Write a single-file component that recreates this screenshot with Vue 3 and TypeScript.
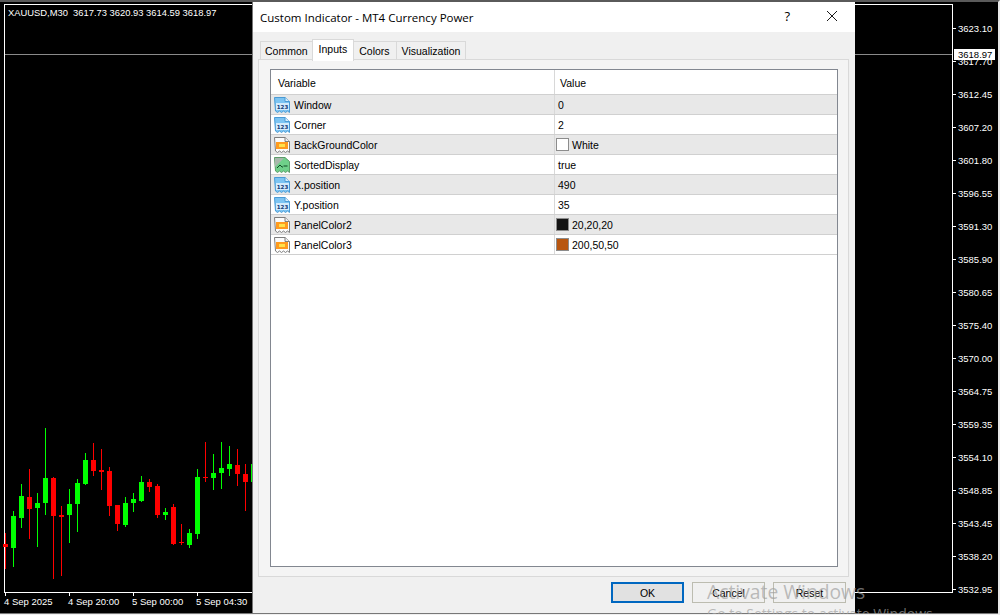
<template>
  <div class="terminal">
    <div class="chart-row">
      <div class="chart-frame">
        <span class="chart-title">XAUUSD,M30&nbsp; 3617.73 3620.93 3614.59 3618.97</span>
        <div class="bid-line"></div>
        <svg class="candles" width="252" height="615" viewBox="0 0 252 615">
          <g v-for="(c, i) in candles" :key="i" :fill="c.up ? '#00ff00' : '#ff0000'">
            <rect :x="candleX(i)" :y="c.high" width="1" :height="c.low - c.high" />
            <rect :x="candleX(i) - 2" :y="c.top" width="5" :height="c.bottom - c.top" />
          </g>
        </svg>
      </div>
      <div class="price-axis">
        <span v-for="p in prices" :key="p" class="price">{{ p }}</span>
        <span class="price-tag">3618.97</span>
      </div>
    </div>
    <div class="time-axis">
      <span v-for="t in times" :key="t" class="time">{{ t }}</span>
    </div>

    <div class="dialog">
      <div class="title-bar">
        <span class="title">Custom Indicator - MT4 Currency Power</span>
        <span class="help">?</span>
        <svg class="close" width="12" height="12" viewBox="0 0 12 12">
          <path d="M1 1l10 10M11 1L1 11" stroke="#1a1a1a" stroke-width="1" fill="none" />
        </svg>
      </div>
      <div class="dialog-body">
        <div class="tabs">
          <span v-for="t in tabs" :key="t" class="tab" :class="{ active: t === 'Inputs' }">{{ t }}</span>
        </div>
        <div class="tab-panel">
          <div class="list">
            <div class="list-head">
              <span class="col-var">Variable</span>
              <span class="col-val">Value</span>
            </div>
            <div v-for="(row, i) in rows" :key="row.name" class="row" :class="{ odd: i % 2 === 0 }">
              <div class="col-var">
                <svg v-if="row.kind === 'num'" class="icon" width="16" height="16" viewBox="0 0 16 16">
                  <path d="M.5 .5H11l4.500 4v11l-2-1.500-2 1.500-2-1.500-2 1.500-2-1.500-2 1.500-2-1.500z" fill="#7cc4f2" stroke="#4a9ad4" />
                  <path d="M11 .5v4h4.500" fill="#d8eefa" stroke="#4a9ad4" />
                  <rect x="2" y="6" width="13" height="7" fill="#d4ebfb" />
                  <text x="8.500" y="12" class="num-glyph">123</text>
                </svg>
                <svg v-else-if="row.kind === 'color'" class="icon" width="16" height="16" viewBox="0 0 16 16">
                  <path d="M.5 .5H11l4.500 4v11l-2-1.500-2 1.500-2-1.500-2 1.500-2-1.500-2 1.500-2-1.500z" fill="#fbfbfb" stroke="#7d7d7d" />
                  <path d="M11 .5v4h4.500" fill="#eee" stroke="#7d7d7d" />
                  <rect x="2" y="5" width="12" height="7" fill="#ff9a1e" />
                  <rect x="5" y="7" width="6" height="3" fill="#ffe14a" />
                </svg>
                <svg v-else class="icon" width="16" height="16" viewBox="0 0 16 16">
                  <path d="M.5 .5H11l4.500 4v11l-2-1.500-2 1.500-2-1.500-2 1.500-2-1.500-2 1.500-2-1.500z" fill="#6fd08a" stroke="#5b9a68" />
                  <path d="M1 1h9L1 10z" fill="#a9b8ad" />
                  <path d="M3 11l3-3 2 2h1M9.500 9h4" stroke="#0f4a24" fill="none" />
                </svg>
                <span class="name">{{ row.name }}</span>
              </div>
              <div class="col-val">
                <span v-if="row.swatch" class="swatch" :style="{ background: row.swatch }"></span>
                <span :class="{ plain: !row.swatch }">{{ row.value }}</span>
              </div>
            </div>
          </div>
        </div>
        <div class="buttons">
          <button class="btn default">OK</button>
          <button class="btn off">Cancel</button>
          <button class="btn off">Reset</button>
        </div>
      </div>
    </div>

    <div class="watermark">
      <div class="wm-big">Activate Windows</div>
      <div class="wm-small">Go to Settings to activate Windows.</div>
    </div>
  </div>
</template>

<script setup lang="ts">
interface Candle {
  high: number;
  low: number;
  top: number;
  bottom: number;
  up: boolean;
}

interface InputRow {
  name: string;
  value: string;
  kind: 'num' | 'color' | 'bool';
  swatch?: string;
}

function candle(high: number, low: number, top: number, bottom: number, up: boolean): Candle {
  return { high, low, top, bottom, up };
}

const candles: Candle[] = [
  candle(533, 569, 544, 547, false),
  candle(511, 567, 516, 548, true),
  candle(484, 528, 496, 518, true),
  candle(469, 539, 497, 509, false),
  candle(493, 547, 503, 508, true),
  candle(428, 515, 478, 503, true),
  candle(477, 579, 478, 516, false),
  candle(506, 576, 515, 517, false),
  candle(489, 543, 504, 515, true),
  candle(479, 532, 483, 504, true),
  candle(453, 485, 460, 484, true),
  candle(443, 476, 460, 471, false),
  candle(449, 490, 470, 472, false),
  candle(467, 516, 471, 506, false),
  candle(505, 531, 505, 524, false),
  candle(497, 527, 503, 525, true),
  candle(493, 512, 499, 503, true),
  candle(476, 502, 482, 501, true),
  candle(479, 492, 482, 487, false),
  candle(484, 518, 486, 515, false),
  candle(508, 520, 512, 515, true),
  candle(504, 545, 507, 544, false),
  candle(524, 545, 542, 543, false),
  candle(529, 548, 533, 545, true),
  candle(469, 539, 477, 534, true),
  candle(442, 482, 477, 478, false),
  candle(454, 490, 473, 478, true),
  candle(442, 489, 468, 473, true),
  candle(446, 476, 464, 469, true),
  candle(449, 486, 465, 474, false),
  candle(464, 511, 474, 482, false),
  candle(459, 482, 464, 482, true),
];

function candleX(i: number): number {
  return 5 + i * 8;
}

const prices = [
  '3623.10', '3617.70', '3612.45', '3607.20', '3601.80', '3596.55', '3591.30',
  '3585.90', '3580.65', '3575.40', '3570.00', '3564.75', '3559.35', '3554.10',
  '3548.85', '3543.45', '3538.20', '3532.95',
];

const times = ['4 Sep 2025', '4 Sep 20:00', '5 Sep 00:00', '5 Sep 04:30'];

const tabs = ['Common', 'Inputs', 'Colors', 'Visualization'];

const rows: InputRow[] = [
  { name: 'Window', value: '0', kind: 'num' },
  { name: 'Corner', value: '2', kind: 'num' },
  { name: 'BackGroundColor', value: 'White', kind: 'color', swatch: '#ffffff' },
  { name: 'SortedDisplay', value: 'true', kind: 'bool' },
  { name: 'X.position', value: '490', kind: 'num' },
  { name: 'Y.position', value: '35', kind: 'num' },
  { name: 'PanelColor2', value: '20,20,20', kind: 'color', swatch: '#141414' },
  { name: 'PanelColor3', value: '200,50,50', kind: 'color', swatch: '#b8560f' },
];
</script>

<style>
html,
body {
  margin: 0;
  background: #000;
}
</style>

<style scoped>
.terminal {
  position: relative;
  width: 1000px;
  height: 615px;
  box-sizing: border-box;
  overflow: hidden;
  background: #000;
  border-top: 2px solid #5a5a5a;
  border-bottom: 1px solid #f0f0f0;
  border-right: 2px solid #e8e8e8;
  box-shadow: inset 0 -1px #777;
  padding: 2px 0 0 4px;
  font-family: "Liberation Sans", Arial, sans-serif;
  font-size: 10.5px;
  color: #fff;
}

.chart-row {
  display: flex;
  height: 589px;
}

.chart-frame {
  position: relative;
  width: 949px;
  box-sizing: border-box;
  border: 1px solid #fff;
}

.chart-title {
  position: absolute;
  left: 3px;
  top: 2px;
  font-size: 9.4px;
  white-space: nowrap;
}

.bid-line {
  position: absolute;
  left: 0;
  right: 0;
  top: 49px;
  height: 1px;
  background: #8a8a8a;
}

.candles {
  position: absolute;
  left: -5px;
  top: -5px;
}

.price-axis {
  position: relative;
  display: flex;
  flex-direction: column;
  padding-top: 8px;
}

.price {
  position: relative;
  height: 33px;
  line-height: 33px;
  padding-left: 5px;
  font-size: 9.5px;
}

.price::before {
  content: "";
  position: absolute;
  left: 0;
  top: 16px;
  width: 3px;
  height: 1px;
  background: #fff;
}

.price-tag {
  position: absolute;
  left: 1px;
  top: 45px;
  width: 37px;
  height: 11px;
  line-height: 11px;
  padding-left: 4px;
  background: #fff;
  color: #000;
  font-size: 9.5px;
}

.time-axis {
  display: flex;
  padding-top: 3px;
}

.time {
  position: relative;
  width: 64px;
  font-size: 9.5px;
}

.time::before {
  content: "";
  position: absolute;
  left: 1px;
  top: -3px;
  width: 1px;
  height: 3px;
  background: #fff;
}

.dialog {
  position: absolute;
  left: 252px;
  top: 0;
  width: 603px;
  height: 612px;
  box-sizing: border-box;
  display: flex;
  flex-direction: column;
  background: #f0f0f0;
  color: #000;
  border-left: 1px solid #777;
  border-bottom: 1px solid #777;
}

.title-bar {
  display: flex;
  align-items: center;
  height: 30px;
  flex: none;
  background: #fff;
  padding: 0 17px 0 7px;
}

.title {
  flex: 1;
  font-family: "Open Sans", sans-serif;
  font-size: 11.5px;
}

.help {
  font-family: "Open Sans", sans-serif;
  font-size: 13px;
  margin: 0 36px 2px 0;
}

.close {
  margin-bottom: 2px;
}

.dialog-body {
  flex: 1;
  display: flex;
  flex-direction: column;
  padding: 8px 6px 0 5px;
}

.tabs {
  display: flex;
  height: 19px;
  padding-left: 2px;
}

.tab {
  height: 18px;
  line-height: 18px;
  margin-top: 1px;
  padding: 0 5px;
  background: #f0f0f0;
  border: 1px solid #d9d9d9;
  border-bottom: none;
  margin-right: -1px;
}

.tab:first-child {
  padding: 0 4px;
}

.tab:nth-child(3) {
  padding-right: 6px;
}

.tab.active {
  position: relative;
  z-index: 1;
  height: 21px;
  margin-top: -1px;
  line-height: 18px;
  background: #fff;
  padding: 0 6px;
}

.tab-panel {
  height: 518px;
  box-sizing: border-box;
  border: 1px solid #d9d9d9;
  background: #f4f4f4;
  padding: 9px 10px 9px 11px;
}

.list {
  height: 100%;
  box-sizing: border-box;
  border: 1px solid #828790;
  background: #fff;
}

.list-head {
  display: flex;
  height: 25px;
  box-sizing: border-box;
  border-bottom: 1px solid #d0d0d0;
}

.row {
  display: flex;
  height: 20px;
  box-sizing: border-box;
  border-bottom: 1px solid #d0d0d0;
}

.row.odd {
  background: #e8e8e8;
}

.col-var {
  display: flex;
  align-items: center;
  width: 284px;
  box-sizing: border-box;
  border-right: 1px solid #d8d8d8;
  padding-left: 3px;
}

.list-head .col-var {
  padding: 2px 0 0 7px;
}

.col-val {
  display: flex;
  align-items: center;
  padding-left: 1px;
}

.list-head .col-val {
  padding: 2px 0 0 5px;
}

.icon {
  flex: none;
  margin-right: 4px;
}

.num-glyph {
  font-family: "DejaVu Sans", sans-serif;
  font-size: 5.5px;
  font-weight: 700;
  fill: #123a78;
  text-anchor: middle;
}

.plain {
  margin-left: 2px;
}

.swatch {
  width: 13px;
  height: 13px;
  box-sizing: border-box;
  border: 1px solid #8c8c8c;
  margin-right: 3px;
}

.buttons {
  display: flex;
  justify-content: flex-end;
  gap: 8px;
  padding: 5px 3px 0 0;
}

.btn {
  width: 73px;
  height: 21px;
  box-sizing: border-box;
  padding: 0;
  font: inherit;
  color: #000;
  background: #e1e1e1;
  border: 1px solid #adadad;
}

.btn.default {
  border: 2px solid #0067c0;
}

.btn.off {
  background: #f0f0f0;
  border-color: #bcbcb0;
}

.watermark {
  position: absolute;
  left: 707px;
  top: 577px;
  font-family: "Open Sans", sans-serif;
  color: rgba(160, 160, 160, 0.7);
  white-space: nowrap;
  pointer-events: none;
}

.wm-big {
  font-size: 19.3px;
  line-height: 26px;
}

.wm-small {
  font-size: 14px;
  line-height: 18px;
}
</style>
